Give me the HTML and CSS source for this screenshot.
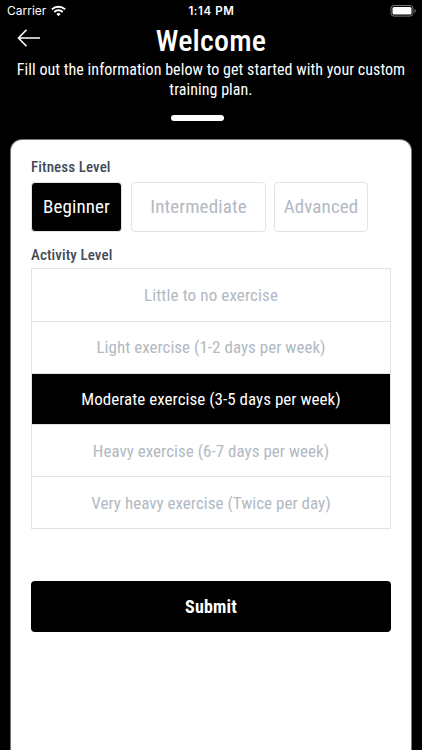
FILE: index.html
```html
<!DOCTYPE html>
<html lang="en">
<head>
<meta charset="utf-8">
<title>Welcome</title>
<link rel="stylesheet" href="styles.css">
</head>
<body>
<div class="screen">
  <div class="status">
    <div class="carrier">Carrier
      <svg width="15" height="12" viewBox="0 0 16 12" fill="none" stroke="#fff" stroke-width="2.1"><path d="M.9 4.3a10.2 10.2 0 0 1 14.2 0M3.5 7a6.5 6.5 0 0 1 9 0"/><path d="M8 11.6 5.7 9.2a3.3 3.3 0 0 1 4.6 0z" fill="#fff" stroke="none"/></svg>
    </div>
    <div class="time">1:14 PM</div>
    <div class="battery"><svg width="26" height="12" viewBox="0 0 26 12"><rect x="1" y=".5" width="22" height="10.6" rx="3" fill="none" stroke="#777"/><rect x="2.5" y="2" width="19" height="7.6" rx="1.5" fill="#fff"/><path d="M24.5 4v3.8q1.3-.6 1.3-1.9T24.5 4" fill="#777"/></svg></div>
  </div>
  <header class="header">
    <svg class="back" width="24" height="20" viewBox="0 0 24 20" fill="none" stroke="#fff" stroke-width="1.6"><path d="M23 10H1.5M9.5 1.7 1.5 10l8 8.2"/></svg>
    <h1 class="title"><span>Welcome</span></h1>
  </header>
  <div class="intro"><span>Fill out the information below to get started with your custom</span><span>training plan.</span></div>
  <div class="progress"><div class="bar"></div></div>
  <main class="card">
    <div class="label"><span>Fitness Level</span></div>
    <div class="levels">
      <button class="level beginner selected"><span>Beginner</span></button>
      <button class="level intermediate"><span>Intermediate</span></button>
      <button class="level advanced"><span>Advanced</span></button>
    </div>
    <div class="label"><span>Activity Level</span></div>
    <div class="list">
      <div class="row loose"><span>Little to no exercise</span></div>
      <div class="row"><span>Light exercise (1-2 days per week)</span></div>
      <div class="row selected"><span>Moderate exercise (3-5 days per week)</span></div>
      <div class="row"><span>Heavy exercise (6-7 days per week)</span></div>
      <div class="row"><span>Very heavy exercise (Twice per day)</span></div>
    </div>
    <button class="submit"><span>Submit</span></button>
  </main>
</div>
</body>
</html>
```
FILE: styles.css
```css
* { box-sizing: border-box; }
body { margin: 0; background: #000; }
button { font: inherit; padding: 0; margin: 0; }
.screen {
  height: 750px;
  overflow: hidden;
  display: flex;
  flex-direction: column;
  background: #000;
  color: #fff;
  font-family: "Roboto Condensed", Roboto, sans-serif;
  font-stretch: 75%;
}
.screen span { display: inline-block; white-space: nowrap; }
.status {
  height: 22px;
  display: grid;
  grid-template-columns: 1fr 1fr 1fr;
  align-items: center;
  padding: 0 6px 0 7px;
  font: 12px/22px Inter, sans-serif;
}
.carrier { display: flex; gap: 5px; align-items: center; }
.time { text-align: center; font-weight: 600; font-size: 11.5px; letter-spacing: .6px; }
.battery { display: flex; justify-content: flex-end; }
.header {
  height: 38px;
  display: grid;
  grid-template-columns: 60px 1fr 60px;
}
.back { margin: 6px 0 0 17px; }
.title { margin: 0; text-align: center; font-size: 30px; line-height: 37px; font-weight: 500; letter-spacing: .2px; }
.intro {
  display: flex;
  flex-direction: column;
  align-items: center;
  font-size: 16px;
  line-height: 19.5px;
  font-weight: 450;
  letter-spacing: .05px;
}
.progress { height: 41px; padding: 16px 0 0 171px; }
.bar { width: 53px; height: 6px; border-radius: 3px; background: #fff; }
.card {
  flex: 1;
  margin: 0 11px;
  padding: 17px 20px 0;
  background: #fff;
  border-radius: 11px 11px 0 0;
  box-shadow: 0 0 0 1px #777;
}
.label { height: 20px; font-size: 15px; line-height: 20px; font-weight: 500; letter-spacing: .1px; color: #3f4b59; }
.levels { display: flex; gap: 9px; margin: 4.5px 0 13px; height: 50px; }
.level {
  border: 1px solid #e1e3e6;
  border-radius: 4px;
  background: #fff;
  color: #b2b9c2;
  font-size: 19px;
  font-weight: 400;
  letter-spacing: .12px;
}
.beginner { width: 91px; }
.intermediate { width: 135px; }
.advanced { width: 94px; margin-left: -1px; }
.level.selected { background: #000; color: #fff; }
.list { margin-top: 3.5px; border: 1px solid #e0e2e5; height: 261px; display: grid; grid-template-rows: repeat(5, 1fr); }
.row {
  display: flex;
  align-items: center;
  justify-content: center;
  color: #b2b9c2;
  font-size: 17px;
  font-weight: 400;
  letter-spacing: .03px;
}
.loose { letter-spacing: .12px; }
.row + .row { border-top: 1px solid #e0e2e5; }
.row.selected { background: #000; color: #fff; }
.submit {
  display: block;
  width: 360px;
  height: 51px;
  margin-top: 51.5px;
  border: 0;
  border-radius: 4px;
  background: #000;
  color: #fff;
  font-size: 18px;
  font-weight: 700;
  letter-spacing: .15px;
}
```
